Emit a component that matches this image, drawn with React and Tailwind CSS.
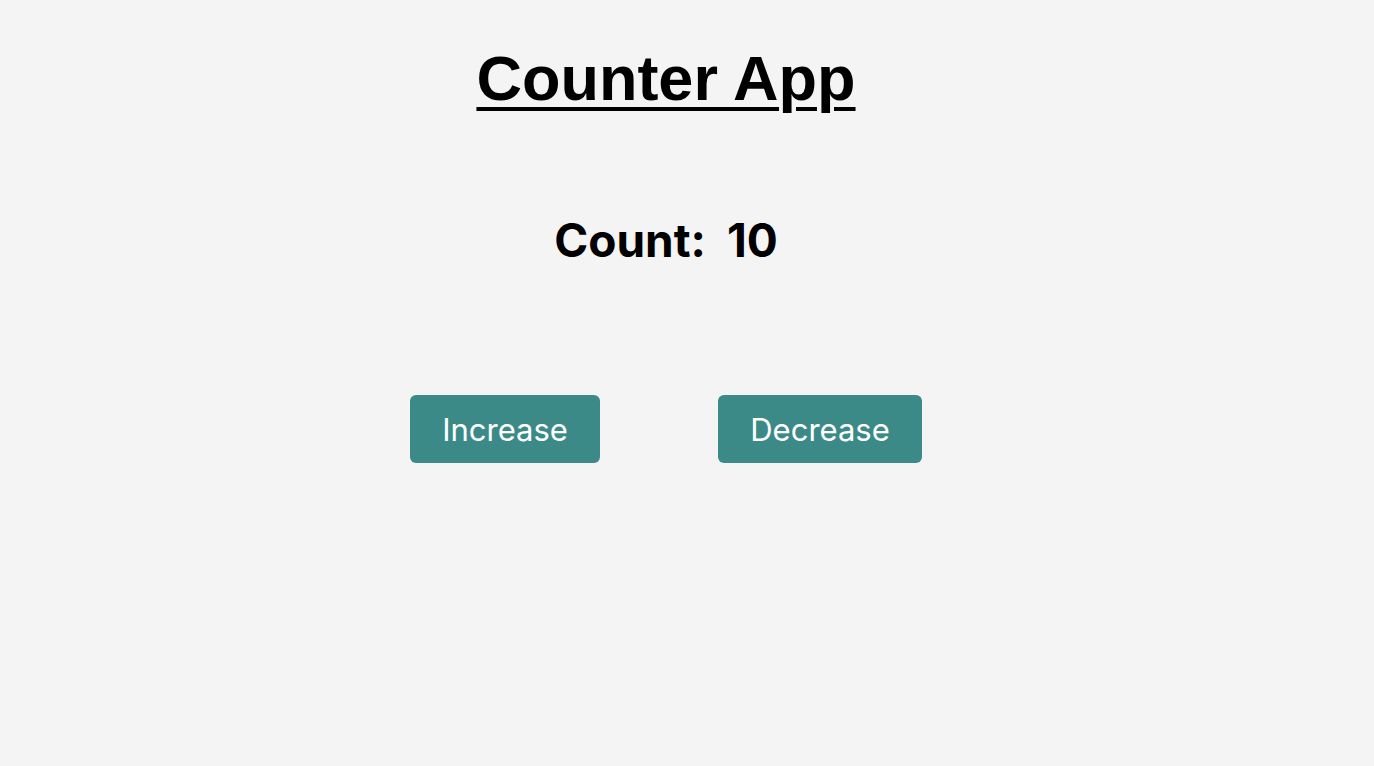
export default function App() {
  const count = 10

  return (
    <div className="min-h-[766px] bg-[#f4f4f4] font-['Inter',sans-serif] text-black">
      <div className="w-[1332px] flex flex-col items-center">
        {/* Title */}
        <h1 className="mt-[38px] font-['Liberation_Sans',Arial,sans-serif] text-[63px] font-bold leading-[80px] underline decoration-[4px] underline-offset-[7px]">
          Counter App
        </h1>

        {/* Count */}
        <div className="mt-[92px] flex items-center gap-[21px] text-[46px] font-bold leading-[60px]">
          <span>Count:</span>
          <span>{count}</span>
        </div>

        {/* Buttons */}
        <div className="mt-[125px] flex gap-[118px]">
          <button className="h-[68px] w-[190px] rounded-[6px] bg-[#3b8a87] pt-[3px] text-[31px] text-white">
            Increase
          </button>
          <button className="h-[68px] w-[204px] rounded-[6px] bg-[#3b8a87] pt-[3px] text-[31px] text-white">
            Decrease
          </button>
        </div>
      </div>
    </div>
  )
}
